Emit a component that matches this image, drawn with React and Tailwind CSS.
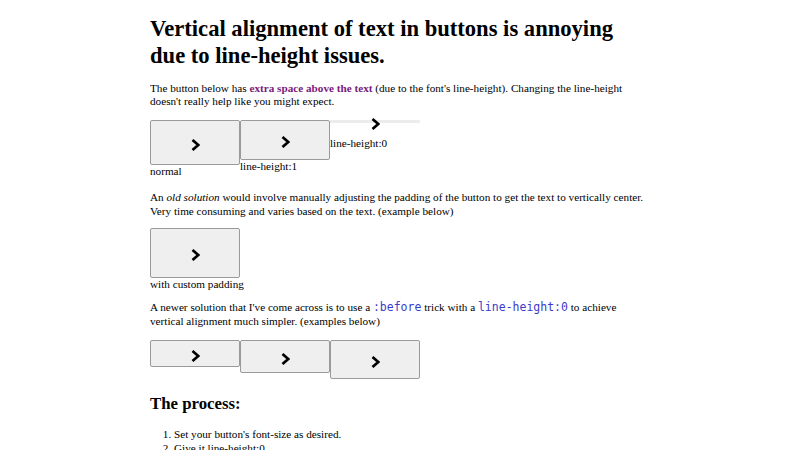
import React from "react";

function Chevron() {
  return (
    <svg width="9" height="12" viewBox="0 0 9 12" className="mt-[4px] block shrink-0">
      <path d="M1.5 1 L7.3 6 L1.5 11" fill="none" stroke="#000" strokeWidth="2.7" strokeLinejoin="miter" />
    </svg>
  );
}

function Btn({ h }) {
  return (
    <div className={`w-[90px] ${h} flex items-center justify-center bg-[#efefef] border border-[#9a9a9a] rounded-[2px]`}>
      <Chevron />
    </div>
  );
}

export default function App() {
  return (
    <div className="min-h-screen bg-white text-black font-['Liberation_Serif',serif] text-[11.2px] leading-[13.8px]">
      <div className="mx-auto w-[500px] pt-[14.5px]">
        <h1 className="w-[480px] text-[22.6px] font-bold leading-[27.6px]">
          Vertical alignment of text in buttons is annoying due to line-height issues.
        </h1>
        <p className="mt-[12px]">
          The button below has{" "}
          <span className="font-bold text-[#7a1a7a]">extra space above the text</span> (due to the font's
          line-height). Changing the line-height doesn't really help like you might expect.
        </p>

        <div className="mt-[11px] flex items-start">
          <div className="w-[90px] flex flex-col">
            <Btn h="h-[45px]" />
            <div>normal</div>
          </div>
          <div className="w-[90px] flex flex-col">
            <Btn h="h-[40px]" />
            <div>line-height:1</div>
          </div>
          <div className="w-[90px] flex flex-col">
            <div className="w-[90px] h-[3px] bg-[#ececec] flex items-center justify-center">
              <Chevron />
            </div>
            <div className="mt-[14px]">line-height:0</div>
          </div>
        </div>

        <p className="mt-[12px]">
          An <i>old solution</i> would involve manually adjusting the padding of the button to get the text to
          vertically center. Very time consuming and varies based on the text. (example below)
        </p>

        <div className="mt-[9px] flex flex-col items-start">
          <Btn h="h-[50px]" />
          <div>with custom padding</div>
        </div>

        <p className="mt-[10px]">
          A newer solution that I've come across is to use a{" "}
          <code className="font-['DejaVu_Sans_Mono',monospace] text-[11.5px] text-[#3b3bc8]">:before</code> trick
          with a{" "}
          <code className="font-['DejaVu_Sans_Mono',monospace] text-[11.5px] text-[#3b3bc8]">line-height:0</code> to
          achieve vertical alignment much simpler. (examples below)
        </p>

        <div className="mt-[11px] flex items-start">
          <Btn h="h-[27px]" />
          <Btn h="h-[33px]" />
          <Btn h="h-[39px]" />
        </div>

        <h2 className="mt-[15px] text-[16.8px] font-bold leading-[20.7px]">The process:</h2>

        <ol className="mt-[13px] list-decimal pl-[24px]">
          <li>Set your button's font-size as desired.</li>
          <li>Give it line-height:0</li>
          <li>Add a :before pseudo-element with display:inline-block and height:1em</li>
        </ol>
      </div>
    </div>
  );
}
